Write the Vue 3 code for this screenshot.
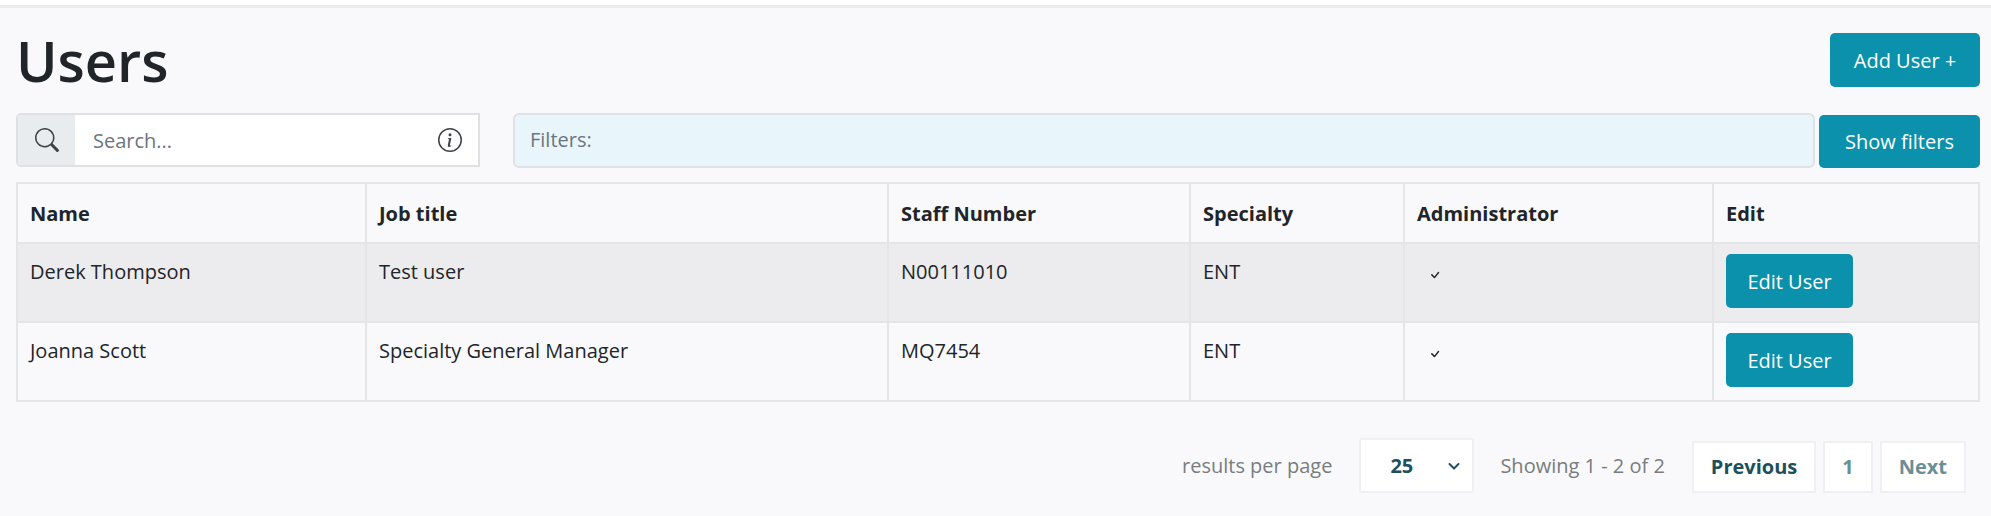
<template>
  <div class="page">
    <div class="title-row">
      <h1>Users</h1>
      <button class="btn btn-add">Add User +</button>
    </div>

    <div class="tools-row">
      <div class="search-group">
        <span class="search-icon">
          <svg width="24" height="24" viewBox="0 0 16 16" fill="#3f4347">
            <path d="M11.742 10.344a6.5 6.5 0 1 0-1.397 1.398l3.85 3.85a1 1 0 0 0 1.415-1.414l-3.85-3.85zM12 6.5a5.5 5.5 0 1 1-11 0 5.5 5.5 0 0 1 11 0z" />
          </svg>
        </span>
        <div class="search-input">
          <span class="placeholder">Search...</span>
          <svg width="24" height="24" viewBox="0 0 16 16" fill="#3f4347">
            <path d="M8 15A7 7 0 1 1 8 1a7 7 0 0 1 0 14zm0 1A8 8 0 1 0 8 0a8 8 0 0 0 0 16z" />
            <path d="m8.93 6.588-2.29.287-.082.38.45.083c.294.07.352.176.288.469l-.738 3.468c-.194.897.105 1.319.808 1.319.545 0 1.178-.252 1.465-.598l.088-.416c-.2.176-.492.246-.686.246-.275 0-.375-.193-.304-.533L8.93 6.588zM9 4.5a1 1 0 1 1-2 0 1 1 0 0 1 2 0z" />
          </svg>
        </div>
      </div>
      <div class="filters">Filters:</div>
      <button class="btn btn-filters">Show filters</button>
    </div>

    <table class="users-table">
      <colgroup>
        <col class="col-name" />
        <col class="col-job" />
        <col class="col-staff" />
        <col class="col-spec" />
        <col class="col-admin" />
        <col />
      </colgroup>
      <thead>
        <tr>
          <th v-for="h in headers" :key="h">{{ h }}</th>
        </tr>
      </thead>
      <tbody>
        <tr v-for="user in users" :key="user.staff">
          <td>{{ user.name }}</td>
          <td>{{ user.job }}</td>
          <td>{{ user.staff }}</td>
          <td>{{ user.specialty }}</td>
          <td class="admin-cell">
            <svg v-if="user.admin" width="16" height="16" viewBox="0 0 16 16" fill="#212529">
              <path d="M10.97 4.97a.75.75 0 0 1 1.07 1.05l-3.99 4.99a.75.75 0 0 1-1.08.02L4.324 8.384a.75.75 0 1 1 1.06-1.06l2.094 2.093 3.473-4.425a.267.267 0 0 1 .02-.022z" />
            </svg>
          </td>
          <td class="edit-cell"><button class="btn btn-edit">Edit User</button></td>
        </tr>
      </tbody>
    </table>

    <div class="pager">
      <span class="muted per-page">results per page</span>
      <div class="page-size">
        <span>25</span>
        <svg width="16" height="16" viewBox="0 0 16 16" fill="none" stroke="#1d4f5c" stroke-width="2" stroke-linecap="round" stroke-linejoin="round">
          <path d="M3.5 6l4.5 4.5L12.500 6" />
        </svg>
      </div>
      <span class="muted showing">Showing 1 - 2 of 2</span>
      <div class="pages">
        <span class="page-btn active">Previous</span>
        <span class="page-btn">1</span>
        <span class="page-btn">Next</span>
      </div>
    </div>
  </div>
</template>

<script setup>
const headers = ['Name', 'Job title', 'Staff Number', 'Specialty', 'Administrator', 'Edit'];

const users = [
  { name: 'Derek Thompson', job: 'Test user', staff: 'N00111010', specialty: 'ENT', admin: true },
  { name: 'Joanna Scott', job: 'Specialty General Manager', staff: 'MQ7454', specialty: 'ENT', admin: true },
];
</script>

<style>
html,
body {
  margin: 0;
  background: #f9f9fb;
}
</style>

<style scoped>
.page {
  box-sizing: border-box;
  width: 1991px;
  height: 516px;
  overflow: hidden;
  padding: 33px 11px 0 16px;
  background: #f9f9fb;
  border-top: 0 solid #eee;
  position: relative;
  font-family: "Open Sans", "Noto Sans", sans-serif;
  font-size: 20px;
  color: #212529;
}

/* white strip and rule along the top edge */
.page::before {
  content: "";
  position: absolute;
  left: 0;
  right: 0;
  top: 0;
  height: 5px;
  background: #fff;
  border-bottom: 3px solid #ececee;
}

.title-row {
  display: flex;
  justify-content: space-between;
  align-items: flex-start;
  height: 80px;
}

h1 {
  margin: 0;
  font-size: 56px;
  line-height: 54px;
  font-weight: 600;
}

.btn {
  border: none;
  border-radius: 5px;
  background: #0b91ab;
  color: #fff;
  font-family: inherit;
  font-size: 20px;
}

.btn-add {
  width: 150px;
  height: 54px;
}

.tools-row {
  display: flex;
  height: 55px;
}

.search-group {
  display: flex;
  width: 464px;
  height: 54px;
  box-sizing: border-box;
  border: 2px solid #dfe1e4;
  border-radius: 5px 0 0 5px;
  margin-right: 33px;
}

.search-icon {
  width: 57px;
  background: #e9ecef;
  display: flex;
  align-items: center;
  justify-content: center;
}

.search-input {
  flex: 1;
  background: #fff;
  display: flex;
  align-items: center;
  justify-content: space-between;
  padding: 0 16px 0 18px;
}

.placeholder {
  color: #6c757d;
}

.filters {
  box-sizing: border-box;
  width: 1302px;
  height: 55px;
  border: 2px solid #dfe1e4;
  border-radius: 6px;
  background: #e8f6fc;
  color: #6c757d;
  line-height: 49px;
  padding-left: 15px;
  margin-right: 4px;
}

.btn-filters {
  width: 161px;
  height: 53px;
  margin-top: 2px;
}

.users-table {
  table-layout: fixed;
  border-collapse: collapse;
  width: 1964px;
  margin-top: 14px;
}

.col-name { width: 349px; }
.col-job { width: 522px; }
.col-staff { width: 302px; }
.col-spec { width: 214px; }
.col-admin { width: 309px; }

th,
td {
  border: 2px solid #e4e5e8;
  padding: 0 12px;
  text-align: left;
  vertical-align: top;
}

th {
  height: 58px;
  font-weight: 700;
  vertical-align: middle;
}

td {
  height: 79px;
  padding-top: 14px;
  box-sizing: border-box;
}

tbody tr:nth-child(odd) td {
  background: #ececee;
}

.admin-cell {
  padding-left: 22px;
  padding-top: 18px;
}

.edit-cell {
  padding-top: 10px;
}

.btn-edit {
  width: 127px;
  height: 54px;
}

.pager {
  display: flex;
  align-items: center;
  margin-top: 36px;
  height: 55px;
  padding-right: 14px;
  justify-content: flex-end;
}

.muted {
  color: #787c80;
}

.page-size {
  box-sizing: border-box;
  width: 115px;
  height: 55px;
  margin: 0 26px 0 27px;
  background: #fff;
  border: 2px solid #f0f0f3;
  border-radius: 3px;
  display: flex;
  align-items: center;
  justify-content: space-between;
  padding: 0 10px 0 29px;
  font-weight: 700;
  color: #1d4f5c;
}

.pages {
  display: flex;
  gap: 7px;
  margin-left: 27px;
  align-self: flex-end;
}

.page-btn {
  box-sizing: border-box;
  height: 52px;
  padding: 0 17px;
  line-height: 48px;
  background: #fff;
  border: 2px solid #f0f0f3;
  font-weight: 700;
  color: #6a8f96;
}

.page-btn.active {
  color: #1d4f5c;
}
</style>
